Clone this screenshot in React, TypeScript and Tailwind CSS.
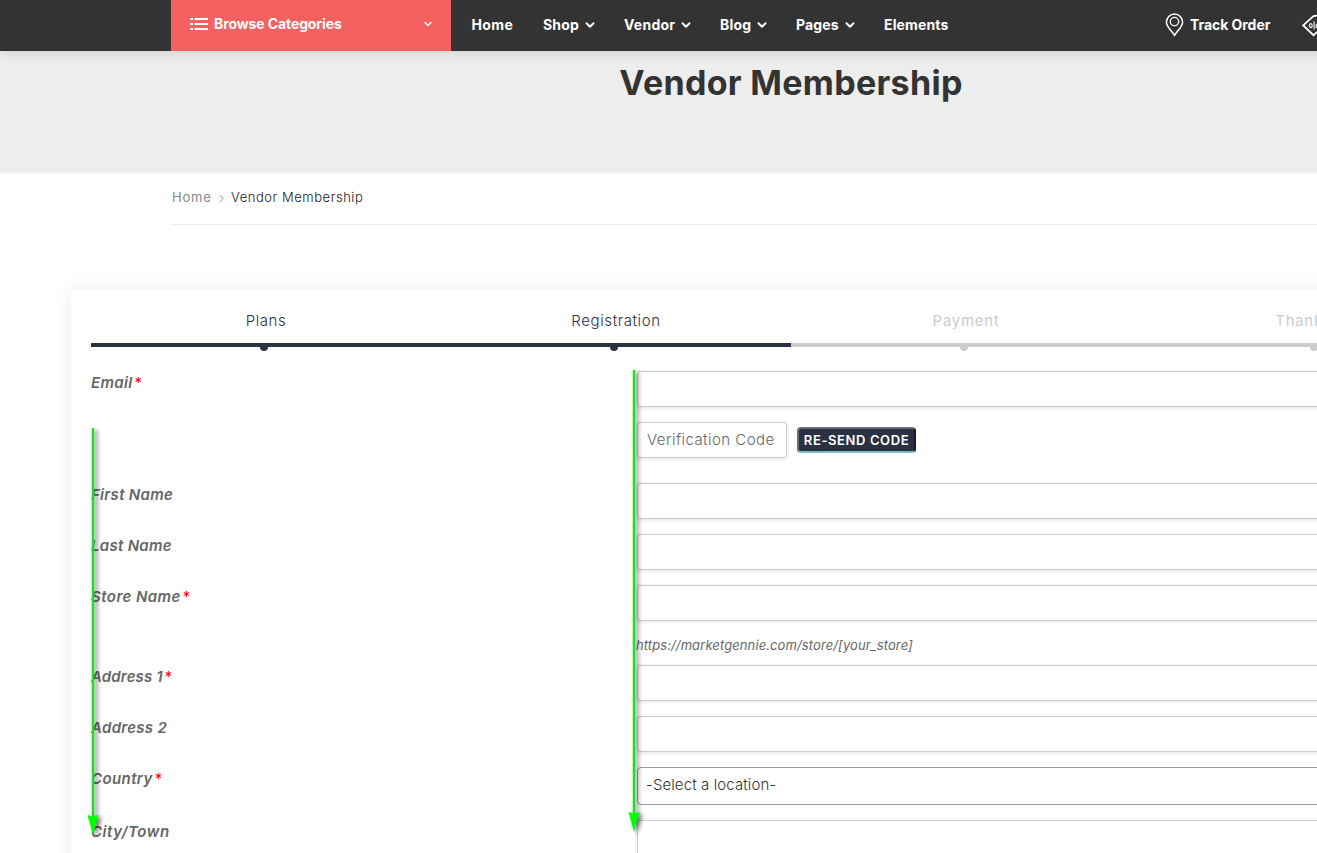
import { ReactNode } from 'react';
import { ChevronDown, ChevronRight } from 'lucide-react';
import clsx from 'clsx';

interface NavItem {
  label: string;
  width: string;
  tracking: string;
  hasMenu?: boolean;
}

const navItems: NavItem[] = [
  { label: 'Home', width: 'w-[71.5px]', tracking: 'tracking-[0.4px]' },
  { label: 'Shop', width: 'w-[81px]', tracking: 'tracking-[0.2px]', hasMenu: true },
  { label: 'Vendor', width: 'w-24', tracking: 'tracking-[0.25px]', hasMenu: true },
  { label: 'Blog', width: 'w-19', tracking: 'tracking-[0.2px]', hasMenu: true },
  { label: 'Pages', width: 'w-22', tracking: 'tracking-[0.15px]', hasMenu: true },
  { label: 'Elements', width: 'w-22', tracking: 'tracking-[0.15px]' },
];

const steps = [
  { label: 'Plans', done: true },
  { label: 'Registration', done: true },
  { label: 'Payment', done: false },
  { label: 'Thank You', done: false },
];

function ListIcon() {
  return (
    <svg width="18" height="12" viewBox="0 0 18 12" fill="#fff" className="shrink-0">
      <path d="M0 0h3v2H0zM4.5 0H18v2H4.5zM0 5h3v2H0zM4.5 5H18v2H4.5zM0 10h3v2H0zM4.5 10H18v2H4.5z" />
    </svg>
  );
}

function PinIcon() {
  return (
    <svg width="19" height="24" viewBox="0 0 19 24" fill="none" stroke="#fff" className="shrink-0">
      <path d="M9.5 22.3C7.6 19 1.4 13.8 1.4 9.2a8.1 8.1 0 0 1 16.2 0c0 4.6-6.2 9.8-8.1 13.1z" strokeWidth="1.5" />
      <circle cx="9.5" cy="8.6" r="4.2" strokeWidth="1.3" />
    </svg>
  );
}

function DealIcon() {
  return (
    <svg width="26" height="24" viewBox="0 0 26 24" fill="none" stroke="#fff" className="shrink-0">
      <path d="M1.2 12.4 11.5 3l4.5-.4h7v7.5l-1.2 3L11.5 22.2z" strokeWidth="1.8" />
      <circle cx="17.6" cy="6" r="1.6" strokeWidth="1.2" />
      <ellipse cx="8.8" cy="12.6" rx="1.4" ry="2" strokeWidth="1.1" />
      <path d="M12.1 8.4v8" strokeWidth="1.1" />
      <ellipse cx="15.4" cy="13" rx="1.4" ry="2" strokeWidth="1.1" />
    </svg>
  );
}

function Header() {
  return (
    <header className="relative z-10 flex h-[51px] w-[1500px] bg-[#333] pl-[171px] text-sm font-bold text-white shadow-[0_2px_10px_rgba(0,0,0,0.12)]">
      <div className="flex w-[280px] shrink-0 items-center bg-[#f56060] pr-[17px] pb-[3px] pl-[19px]">
        <ListIcon />
        <span className="ml-[6px] flex-1 tracking-[-0.1px]">Browse Categories</span>
        <ChevronDown size={12} strokeWidth={3} />
      </div>
      <nav className="flex w-[714px] shrink-0 items-center pb-px pl-[20.5px]">
        {navItems.map((item) => (
          <a key={item.label} className={clsx('flex shrink-0 items-center whitespace-nowrap', item.width, item.tracking)}>
            {item.label}
            {item.hasMenu && <ChevronDown size={14} strokeWidth={3.2} className="ml-1 shrink-0" />}
          </a>
        ))}
      </nav>
      <div className="flex shrink-0 items-center pb-[2px]">
        <PinIcon />
        <span className="ml-[6px] w-28 tracking-[-0.05px]">Track Order</span>
        <DealIcon />
      </div>
    </header>
  );
}

function Stepper() {
  return (
    <div className="flex">
      {steps.map((step) => (
        <div
          key={step.label}
          className={clsx(
            'relative flex h-[37px] w-[350px] shrink-0 justify-center border-b-4 text-[15px]',
            step.done
              ? 'border-[#2a3142] font-light tracking-[0.6px] text-[#2a3142]'
              : 'border-[#ccc] tracking-[0.7px] text-[#ccc]',
          )}
        >
          {step.label}
          <span
            className={clsx(
              'absolute -bottom-2 left-[169px] size-2 rounded-full',
              step.done ? 'bg-[#2a3142]' : 'bg-[#ccc]',
            )}
          />
        </div>
      ))}
    </div>
  );
}

interface FieldProps {
  label?: string;
  tracking?: string;
  required?: boolean;
  className?: string;
  children?: ReactNode;
}

function Field({ label, tracking = 'tracking-[0.3px]', required, className, children }: FieldProps) {
  return (
    <div className={clsx('flex', className)}>
      <div className="w-[546px] shrink-0 text-[15px] leading-6 font-semibold text-[#666] italic">
        <span className={tracking}>{label}</span>
        {required && <span className="ml-[2px] font-normal text-[#f00] not-italic">*</span>}
      </div>
      {children ?? <TextInput />}
    </div>
  );
}

function TextInput() {
  return (
    <input className="h-9 w-[854px] rounded-[3px] border border-[#ccc] bg-white shadow-[0_1px_4px_rgba(0,0,0,0.12)]" />
  );
}

function ArrowOverlay({ className, height }: { className: string; height: number }) {
  return (
    <svg
      width="20"
      height={height + 8}
      className={clsx('pointer-events-none absolute z-20 drop-shadow-[3px_2px_2px_rgba(0,0,0,0.55)]', className)}
    >
      <path d={`M6 0V${height - 15}`} stroke="#19e022" strokeWidth="2.4" />
      <path d={`M0.5 ${height - 20}L6 ${height - 18.5}L11.5 ${height - 20}L6 ${height}Z`} fill="#0f0" />
    </svg>
  );
}

export default function App() {
  return (
    <div className="relative h-[853px] w-full overflow-hidden bg-white font-['Inter',sans-serif]">
      <Header />

      <section className="flex h-[122px] w-[1582px] justify-center bg-[#ededed] pt-[11px]">
        <h1 className="text-[34px] leading-[42px] font-bold tracking-[0.3px] text-[#333]">Vendor Membership</h1>
      </section>

      <div className="ml-[171px] flex h-[52px] w-[1240px] items-center border-b border-[#eee] pb-px pl-px text-[13px]">
        <span className="w-[39px] tracking-[0.8px] text-[#888]">Home</span>
        <ChevronRight size={13} strokeWidth={1.7} className="ml-1 text-[#888]" />
        <span className="ml-[3px] font-light tracking-[0.55px] text-[#222]">Vendor Membership</span>
      </div>

      <main className="mt-[65px] ml-[71px] h-[700px] w-[1440px] bg-white p-5 shadow-[0_0_20px_rgba(0,0,0,0.08)]">
        <Stepper />

        <form className="mt-6">
          <Field label="Email" required className="h-[51px]" />
          <Field className="h-[61px]">
            <input
              placeholder="Verification Code"
              className="h-9 w-[150px] rounded-[3px] border border-[#ccc] px-[9px] pb-px text-[15px] font-light tracking-[0.45px] shadow-[0_1px_4px_rgba(0,0,0,0.12)] placeholder:text-[#666]"
            />
            <button
              type="button"
              className="mt-[5px] ml-[10px] h-[26px] w-[119px] rounded-[4px] border-2 border-t-[#6b6e76] border-r-[#171c28] border-b-[#7fb9c6] border-l-[#6b6e76] bg-[#2a3142] text-[13px] leading-none font-semibold tracking-[0.6px] whitespace-nowrap text-white"
            >
              RE-SEND CODE
            </button>
          </Field>
          <Field label="First Name" className="h-[51px]" />
          <Field label="Last Name" className="h-[51px]" />
          <Field label="Store Name" required className="h-[51px]" tracking="tracking-[0.45px]" />
          <div className="h-[29px] pl-[545px] text-[13px] leading-[19px] tracking-[0.1px] text-[#666] italic">
            https://marketgennie.com/store/[your_store]
          </div>
          <Field label="Address 1" required className="h-[51px]" tracking="tracking-[0.15px]" />
          <Field label="Address 2" className="h-[51px]" />
          <Field label="Country" required className="h-[53px]" tracking="tracking-[0.4px]">
            <div className="flex h-[38px] w-[854px] items-center rounded-[4px] border border-[#999] pb-px pl-2 text-[15px] font-light tracking-[0.1px] text-[#333]">
              -Select a location-
            </div>
          </Field>
          <Field label="City/Town" className="h-[51px]" tracking="tracking-[0.55px]" />
        </form>
      </main>

      <ArrowOverlay className="top-[428px] left-[87px]" height={407} />
      <ArrowOverlay className="top-[370px] left-[628px]" height={462} />
    </div>
  );
}
